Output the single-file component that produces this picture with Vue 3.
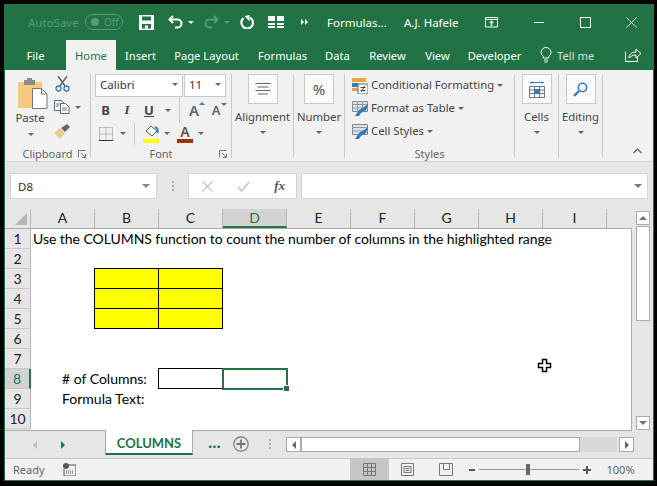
<script setup>
const tabs = [
  { label: 'File', w: 61 }, { label: 'Home', w: 50, active: true }, { label: 'Insert', w: 49 },
  { label: 'Page Layout', w: 83 }, { label: 'Formulas', w: 69 }, { label: 'Data', w: 41 },
  { label: 'Review', w: 59 }, { label: 'View', w: 41 }, { label: 'Developer', w: 73 }
]
const cols = ['A', 'B', 'C', 'D', 'E', 'F', 'G', 'H', 'I']
const rows = [1, 2, 3, 4, 5, 6, 7, 8, 9, 10]
const yellow = [
  { c: 2, r: 3 }, { c: 3, r: 3 }, { c: 2, r: 4 }, { c: 3, r: 4 }, { c: 2, r: 5 }, { c: 3, r: 5 }
]
</script>

<template>
  <div class="frame">
    <div class="win">
      <div class="title">
        <span class="autosave">AutoSave</span>
        <span class="toggle"><i></i><b>Off</b></span>
        <svg class="t-save" width="15" height="15" viewBox="0 0 15 15"><path d="M0 0h15v15H0z" fill="#fff"/><path d="M3 1.500h9v4H3z" fill="#217346"/><path d="M3 9h9v4.500H3z" fill="#217346"/><path d="M6 10.500h3v3H6z" fill="#fff"/></svg>
        <svg class="t-undo" width="15" height="14" viewBox="0 0 15 14"><path d="M5 1L1.500 4.500 5 8M2 4.500h7.500a4 4 0 0 1 0 8H7" fill="none" stroke="#fff" stroke-width="2"/></svg>
        <i class="caret white t-c1"></i>
        <svg class="t-redo" width="15" height="14" viewBox="0 0 15 14"><path d="M10 1l3.500 3.500L10 8M13 4.500H5.500a4 4 0 0 0 0 8H8" fill="none" stroke="#5d9a78" stroke-width="2"/></svg>
        <i class="caret dim t-c2"></i>
        <svg class="t-ref" width="14" height="14" viewBox="0 0 14 14"><path d="M3.500 3.200A5.800 5.800 0 1 0 10 2.600" fill="none" stroke="#fff" stroke-width="2.200"/><path d="M9.500 0v6.500L4.500 1z" fill="#fff"/></svg>
        <svg class="t-grid" width="16" height="14" viewBox="0 0 16 14"><path d="M0 1h7v5H0zM9 1h7v5H9zM0 8h7v2H0zM9 8h7v2H9zM0 11h7v2H0zM9 11h7v2H9z" fill="#fff"/></svg>
        <span class="t-more"><i></i><i></i></span>
        <span class="t-doc">Formulas...</span>
        <span class="t-user">A.J. Hafele</span>
        <svg class="t-disp" width="13" height="11" viewBox="0 0 13 11"><path d="M.5.500h12v9.500H.5zM.5 2.500h12" fill="none" stroke="#fff"/><path d="M6.500 3.500L4 6h1.800v3h1.400V6H9z" fill="#fff"/></svg>
        <i class="t-min"></i>
        <i class="t-max"></i>
        <svg class="t-close" width="11" height="11" viewBox="0 0 11 11"><path d="M.5.500l10 10M10.500.500l-10 10" stroke="#fff" fill="none"/></svg>
      </div>

      <div class="tabs">
        <span v-for="t in tabs" :key="t.label" class="tab" :class="{ active: t.active }" :style="{ width: t.w + 'px' }">{{ t.label }}</span>
        <svg class="bulb" width="12" height="16" viewBox="0 0 12 16"><path d="M3.500 11C3.500 8.500 1 8 1 5.500a5 5 0 0 1 10 0C11 8 8.500 8.500 8.500 11zM4 13h4M4.500 15h3" fill="none" stroke="#fff"/></svg>
        <span class="tell">Tell me</span>
        <svg class="share" width="17" height="14" viewBox="0 0 17 14"><path d="M.5 3.500v10h12v-4" fill="none" stroke="#fff"/><path d="M4 10c0-4 3-6 7-6V1l5 4.500L11 10V7C8 7 6 8 4 10z" fill="none" stroke="#fff"/></svg>
      </div>

      <div class="ribbon">
        <div class="group g-clip">
          <div class="gbody clip">
            <div class="paste">
              <svg width="30" height="31" viewBox="0 0 30 31"><path d="M0 4h24v26H0z" fill="#f4ca7f"/><path d="M6 2h3V0h5v2h3v5H6z" fill="#8c8c8c"/><path d="M14.500 10.500h9l5.500 5.500v14.500H14.500z" fill="#fff" stroke="#777"/><path d="M23.500 10.500v5.500H29" fill="none" stroke="#777"/></svg>
              <span class="rtext">Paste</span>
              <i class="caret paste-c"></i>
            </div>
            <div class="clip-tools">
              <svg class="scis" width="15" height="16" viewBox="0 0 15 16"><path d="M3 0l7 10M12 0L5 10" stroke="#666" stroke-width="1.500" fill="none"/><circle cx="3.500" cy="12.500" r="2.500" fill="none" stroke="#2e7dbd" stroke-width="1.300"/><circle cx="11.500" cy="12.500" r="2.500" fill="none" stroke="#2e7dbd" stroke-width="1.300"/></svg>
              <div class="copy-row">
                <svg width="16" height="14" viewBox="0 0 16 14"><path d="M.5.500h7l2 2v8h-9z" fill="#fff" stroke="#666"/><path d="M6.500 3.500h5l3.500 3.500v6.500H6.500z" fill="#fff" stroke="#666"/><path d="M2 4h4M2 6h3M8 8h5M8 10h5" stroke="#3d86c4"/></svg>
                <i class="caret copy-c"></i>
              </div>
              <svg class="brush" width="16" height="15" viewBox="0 0 16 15"><path d="M0 9l6-5 5 5-5 6z" fill="#e9c98d"/><path d="M7 4l4 4 5-5-3-3z" fill="#666"/></svg>
            </div>
          </div>
          <div class="glabel">Clipboard<svg class="launch" width="8" height="8" viewBox="0 0 8 8"><path d="M.5 7.500V.500h7M7.500 4v3.500H4M3 3l4 4" stroke="#777" fill="none"/></svg></div>
        </div>

        <div class="group g-font">
          <div class="gbody font">
            <div class="font-r1">
              <div class="combo c-name">Calibri<i class="caret"></i></div>
              <div class="combo c-size">11<i class="caret"></i></div>
            </div>
            <div class="font-r2">
              <span class="fb b">B</span><span class="fb it">I</span><span class="fb un">U</span>
              <i class="caret fc"></i><span class="vsep"></span>
              <span class="grow big">A<i class="up"></i></span>
              <span class="grow small">A<i class="down"></i></span>
            </div>
            <div class="font-r3">
              <svg class="bord" width="14" height="14" viewBox="0 0 14 14"><path d="M.5.500h13v13M.5.500v13M7 .500v13M.5 7h13" fill="none" stroke="#888" stroke-dasharray="1 1"/><path d="M0 13.500h14" stroke="#333"/></svg>
              <i class="caret r3c1"></i><span class="vsep s3"></span>
              <span class="colorbtn c-fill">
                <svg width="15" height="12" viewBox="0 0 15 12"><path d="M7 1l6 5-5 5-6-5z" fill="#fff" stroke="#555"/><path d="M11 2c3 1 3 4 2.500 6" stroke="#3d86c4" stroke-width="2" fill="none"/></svg>
                <i class="bar yl"></i>
              </span>
              <i class="caret r3c2"></i>
              <span class="colorbtn c-col"><span class="colA">A</span><i class="bar rd"></i></span>
              <i class="caret r3c3"></i>
            </div>
          </div>
          <div class="glabel">Font<svg class="launch l-font" width="8" height="8" viewBox="0 0 8 8"><path d="M.5 7.500V.500h7M7.500 4v3.500H4M3 3l4 4" stroke="#777" fill="none"/></svg></div>
        </div>

        <div class="group g-align">
          <div class="gbody bigcol">
            <div class="bigbtn"><svg width="16" height="12" viewBox="0 0 16 12"><path d="M.500 .5h15M2.500 4h11M.500 7.500h15M3 11h10" stroke="#666" fill="none"/></svg></div>
            <span class="rtext r-big">Alignment</span><i class="caret"></i>
          </div>
        </div>

        <div class="group g-num">
          <div class="gbody bigcol">
            <div class="bigbtn pct">%</div>
            <span class="rtext r-big">Number</span><i class="caret"></i>
          </div>
        </div>

        <div class="group g-styles">
          <div class="gbody styles">
            <div class="srow">
              <svg width="16" height="16" viewBox="0 0 16 16"><path d="M0 0h14v4H0z" fill="#e8a33d"/><path d="M0 5h6v4H0z" fill="#2e7dbd"/><path d="M0 10h6v3H0z" fill="#e8a33d"/><path d="M6 6h10v10H6z" fill="#fff" stroke="#666"/><path d="M8.500 9.500h5M8.500 12.500h5M12.500 8l-3 6" stroke="#444" fill="none"/></svg>
              <span class="rtext">Conditional Formatting</span><i class="caret"></i>
            </div>
            <div class="srow">
              <svg width="16" height="16" viewBox="0 0 16 16"><path d="M.500.500h15v10H.500z" fill="#d8e4ec" stroke="#888"/><path d="M0 3.500h16M0 7h16M5.500 0v11M10.500 0v11" stroke="#999"/><path d="M3 15l4-6 5-3 4-3-2 6-5 3-2 3z" fill="#2e7dbd"/></svg>
              <span class="rtext">Format as Table</span><i class="caret"></i>
            </div>
            <div class="srow">
              <svg width="16" height="16" viewBox="0 0 16 16"><path d="M.500.500h15v10H.500z" fill="#d8e4ec" stroke="#888"/><path d="M0 3.500h16M0 7h16" stroke="#999"/><path d="M3 15l4-6 5-3 4-3-2 6-5 3-2 3z" fill="#2e7dbd"/></svg>
              <span class="rtext">Cell Styles</span><i class="caret"></i>
            </div>
          </div>
          <div class="glabel">Styles</div>
        </div>

        <div class="group g-cells">
          <div class="gbody bigcol">
            <div class="bigbtn"><svg width="16" height="17" viewBox="0 0 16 17"><path d="M1 1.500h14M3 .500v2M13 .500v2" stroke="#2e7dbd" fill="none"/><path d="M.500 5.500h15v11H.500zM.500 9h15M.500 12.500h15M5.500 5v11M10.500 5v11" fill="none" stroke="#777"/><path d="M5 8h6v5H5z" fill="#2e7dbd"/></svg></div>
            <span class="rtext r-big">Cells</span><i class="caret"></i>
          </div>
        </div>

        <div class="group g-edit">
          <div class="gbody bigcol">
            <div class="bigbtn"><svg width="15" height="15" viewBox="0 0 15 15"><circle cx="9.500" cy="5.500" r="4.200" fill="none" stroke="#2e7dbd" stroke-width="1.600"/><path d="M1 14l5-5" stroke="#2e7dbd" stroke-width="2.400"/></svg></div>
            <span class="rtext r-big">Editing</span><i class="caret"></i>
          </div>
        </div>

        <div class="rib-end"><svg width="9" height="6" viewBox="0 0 9 6"><path d="M.500 5L4.500 1l4 4" stroke="#666" stroke-width="1.400" fill="none"/></svg></div>
      </div>

      <div class="fbar">
        <div class="namebox">D8<i class="caret"></i></div>
        <span class="vdots"><i></i><i></i><i></i></span>
        <div class="fxbox">
          <svg width="11" height="11" viewBox="0 0 11 11"><path d="M.5.500l10 10M10.500.500l-10 10" stroke="#c6c6c6" stroke-width="1.300" fill="none"/></svg>
          <svg width="13" height="11" viewBox="0 0 13 11"><path d="M1 6l3.500 4L12 1" stroke="#c6c6c6" stroke-width="1.600" fill="none"/></svg>
          <span class="fx">fx</span>
        </div>
        <div class="finput"><i class="caret"></i></div>
      </div>

      <div class="sheetwrap">
        <div class="sheet">
          <div class="colhead">
            <div class="corner"><i></i></div>
            <div v-for="c in cols" :key="c" class="ch" :class="{ sel: c === 'D' }">{{ c }}</div>
          </div>
          <div class="sbody">
            <div class="rowhead">
              <div v-for="r in rows" :key="r" class="rh" :class="{ sel: r === 8 }">{{ r }}</div>
            </div>
            <div class="cells">
              <div class="cell heading">Use the COLUMNS function to count the number of columns in the highlighted range</div>
              <div
                v-for="y in yellow"
                :key="y.c + '-' + y.r"
                class="yellow"
                :style="{ gridColumn: y.c, gridRow: y.r }"
              ></div>
              <div class="cell lbl l8"># of Columns:</div>
              <div class="boxed"></div>
              <div class="selected"><i></i></div>
              <div class="cell lbl l9">Formula Text:</div>
              <svg class="cursor" width="15" height="15" viewBox="0 0 15 15"><path d="M5.500 1.500h4v4h4v4h-4v4h-4v-4h-4v-4h4z" fill="#fff" stroke="#000" stroke-width="1.500"/></svg>
            </div>
          </div>
        </div>
        <div class="vscroll">
          <div class="sbtn"><i class="tri-up"></i></div>
          <div class="vthumb"></div>
          <div class="vtrack"></div>
          <div class="sbtn dn"><i class="caret"></i></div>
        </div>
      </div>

      <div class="sheettabs">
        <i class="arr-l"></i>
        <i class="arr-r"></i>
        <div class="stab">COLUMNS</div>
        <span class="dots">...</span>
        <span class="plus"><svg width="16" height="16" viewBox="0 0 16 16"><circle cx="8" cy="8" r="7.200" fill="none" stroke="#777" stroke-width="1.200"/><path d="M8 3.500v9M3.500 8h9" stroke="#777" stroke-width="1.800"/></svg></span>
        <span class="vdots v2"><i></i><i></i><i></i></span>
        <div class="hscroll">
          <div class="hbtn"><i class="tl"></i></div>
          <div class="hthumb"></div>
          <div class="htrack"></div>
          <div class="hbtn last"><i class="tr"></i></div>
        </div>
      </div>

      <div class="status">
        <span class="ready">Ready</span>
        <svg class="macro" width="13" height="13" viewBox="0 0 13 13"><circle cx="3" cy="3" r="3" fill="#555"/><path d="M5 2h8v11H1V6" fill="none" stroke="#555"/><path d="M3 8h8M3 10h8" stroke="#555" stroke-dasharray="1 1"/></svg>
        <div class="views">
          <span class="vw on"><svg width="13" height="13" viewBox="0 0 13 13"><path d="M.5.500h12v12H.5zM4.500 0v13M8.500 0v13M0 4.500h13M0 8.500h13" fill="none" stroke="#777"/></svg></span>
          <span class="vw"><svg width="13" height="13" viewBox="0 0 13 13"><path d="M.5.500h12v12H.5z" fill="none" stroke="#777"/><path d="M3 3.500h7v6H3zM4.500 5.500h4M4.500 7.500h4" fill="none" stroke="#777"/></svg></span>
          <span class="vw"><svg width="14" height="13" viewBox="0 0 14 13"><path d="M.5.500h13v12H.5zM4.500.500v6h6v-6" fill="none" stroke="#777"/></svg></span>
        </div>
        <i class="zminus"></i>
        <div class="slider"><i></i></div>
        <i class="zplus"></i>
        <span class="zoompc">100%</span>
      </div>
    </div>
  </div>
</template>

<style>
html, body { margin: 0; background: #000; }
</style>

<style scoped>
.frame { width: 657px; height: 486px; box-sizing: border-box; padding: 4px 3px 5px 4px; background: #000; overflow: hidden; font-family: "Noto Sans", sans-serif; font-size: 11.300px; color: #444; }
.win { width: 650px; height: 477px; box-sizing: border-box; border: 1px solid #217346; border-width: 0 1px 1px 1px; background: #e6e6e6; display: flex; flex-direction: column; }
i { display: block; font-style: normal; }
.caret { width: 0; height: 0; border-left: 3px solid transparent; border-right: 3px solid transparent; border-top: 3px solid #666; flex: none; }
.caret.white { border-top-color: #fff; }
.caret.dim { border-top-color: #5d9a78; }

.title { height: 36px; flex: none; background: #217346; display: flex; align-items: center; color: #fff; padding-left: 23px; }
.autosave { width: 57px; color: #5d9a78; font-size: 11.500px; }
.toggle { width: 38px; height: 16px; box-sizing: border-box; border: 1px solid #5d9a78; border-radius: 8px; display: flex; align-items: center; color: #5d9a78; font-size: 10px; padding-left: 5px; font-style: normal; }
.toggle i { width: 8px; height: 8px; border-radius: 50%; background: #5d9a78; margin-right: 5px; }
.toggle b { font-weight: normal; }
.t-save { margin-left: 16px; }
.t-undo { margin-left: 14px; }
.t-c1 { margin-left: 5px; }
.t-redo { margin-left: 10px; }
.t-c2 { margin-left: 5px; }
.t-ref { margin-left: 10px; }
.t-grid { margin-left: 14px; }
.t-more { margin-left: 17px; display: flex; gap: 1px; }
.t-more i { width: 0; height: 0; border-left: 3px solid #fff; border-top: 3px solid transparent; border-bottom: 3px solid transparent; }
.t-doc { margin-left: 19px; width: 77px; font-size: 11.500px; }
.t-user { width: 81px; font-size: 11.500px; }
.t-min { width: 10px; height: 1px; background: #fff; margin-left: 36px; }
.t-max { width: 9px; height: 9px; border: 1px solid #fff; margin-left: 36px; }
.t-close { margin-left: 35px; }

.tabs { height: 30px; flex: none; background: #217346; display: flex; align-items: stretch; color: #fff; }
.tab { display: flex; align-items: center; justify-content: center; flex: none; font-size: 11.200px; }
.tab.active { background: #f1f1f1; color: #217346; }
.bulb { align-self: center; margin-left: 9px; }
.tell { align-self: center; margin-left: 5px; color: #d3e3da; width: 68px; font-size: 11.200px; }
.share { align-self: center; }

.ribbon { height: 92px; flex: none; box-sizing: border-box; background: #f1f1f1; border-bottom: 1px solid #d2d2d2; padding-top: 4px; display: flex; }
.group { height: 84px; box-sizing: border-box; border-right: 1px solid #c8c8c8; flex: none; display: flex; flex-direction: column; }
.gbody { height: 73px; flex: none; }
.glabel { height: 14px; line-height: 14px; text-align: center; color: #666; font-size: 11px; position: relative; }
.launch { position: absolute; right: 4px; top: 3px; }
.g-clip { width: 86px; }
.g-font { width: 141px; }
.g-align { width: 62px; }
.g-num { width: 51px; }
.g-styles { width: 170px; }
.g-cells, .g-edit { width: 44px; }

.clip { display: flex; }
.paste { width: 49px; padding-top: 4px; display: flex; flex-direction: column; align-items: center; padding-left: 7px; box-sizing: border-box; }
.rtext { color: #444; white-space: nowrap; }
.paste .rtext { line-height: 18px; margin-left: -6px; }
.paste-c { margin-top: 6px; margin-left: -4px; }
.clip-tools { display: flex; flex-direction: column; }
.scis { margin-top: 2px; margin-left: 1px; }
.copy-row { display: flex; align-items: center; margin-top: 8px; }
.copy-c { margin-left: 5px; }
.brush { margin-top: 10px; }

.font { box-sizing: border-box; padding-left: 4px; }
.font-r1 { display: flex; gap: 1px; height: 22px; }
.combo { box-sizing: border-box; height: 23px; background: #fff; border: 1px solid #c8c8c8; display: flex; align-items: center; justify-content: space-between; padding: 0 4px 2px; color: #333; font-size: 11.500px; }
.c-name { width: 88px; }
.c-size { width: 42px; }
.font-r2 { display: flex; align-items: center; height: 26px; margin-top: 1px; }
.fb { width: 22px; text-align: center; color: #444; font-size: 13px; flex: none; }
.fb.b { font-weight: bold; width: 21px; }
.fb.it { font-style: italic; font-family: "Liberation Serif", serif; font-weight: bold; }
.fb.un { text-decoration: underline; font-weight: bold; }
.fc { margin-left: 5px; }
.vsep { width: 1px; height: 26px; background: #c8c8c8; margin-left: 8px; }
.grow { position: relative; width: 14px; text-align: center; color: #666; font-weight: 600; flex: none; }
.grow.big { font-size: 15px; margin-left: 7px; }
.grow.small { font-size: 13px; margin-left: 8px; }
.up, .down { position: absolute; right: -4px; top: 2px; width: 0; height: 0; border-left: 3px solid transparent; border-right: 3px solid transparent; }
.up { border-bottom: 3px solid #2e7dbd; }
.down { border-top: 3px solid #2e7dbd; }
.font-r3 { display: flex; align-items: center; height: 21px; }
.bord { margin-left: 4px; }
.r3c1 { margin-left: 7px; }
.s3 { height: 22px; margin-left: 8px; }
.colorbtn { width: 16px; display: flex; flex-direction: column; align-items: center; flex: none; }
.c-fill { margin-left: 8px; }
.r3c2 { margin-left: 5px; }
.c-col { margin-left: 7px; }
.r3c3 { margin-left: 5px; }
.bar { width: 16px; height: 4px; }
.bar.yl { background: #ffff00; margin-top: 2px; }
.bar.rd { background: #a33100; }
.colA { font-size: 14px; line-height: 14px; font-weight: 600; color: #555; }

.bigcol { display: flex; flex-direction: column; align-items: center; }
.bigbtn { width: 30px; height: 30px; box-sizing: border-box; border: 1px solid #c8c8c8; background: #fafafa; display: flex; align-items: center; justify-content: center; flex: none; }
.pct { font-size: 15px; color: #555; }
.r-big { line-height: 18px; margin-top: 4px; }
.bigcol .caret { margin-top: 5px; }

.styles { box-sizing: border-box; padding-left: 7px; }
.srow { height: 23px; display: flex; align-items: center; }
.srow .rtext { margin: 0 0 2px 3px; }
.srow .caret { margin-left: 3px; }

.rib-end { flex: 1; display: flex; justify-content: flex-end; align-items: flex-end; padding: 0 11px 4px 0; height: 84px; box-sizing: border-box; }

.fbar { height: 47px; flex: none; box-sizing: border-box; padding: 11px 5px 0 5px; display: flex; background: #e6e6e6; }
.namebox, .fxbox, .finput { height: 26px; box-sizing: border-box; background: #fff; border: 1px solid #d4d4d4; }
.namebox { width: 147px; display: flex; align-items: center; justify-content: space-between; padding: 0 6px 0 7px; color: #333; font-size: 11.500px; }
.namebox .caret { border-left-width: 4px; border-right-width: 4px; border-top-width: 4px; border-top-color: #888; }
.vdots { width: 31px; height: 26px; display: flex; flex-direction: column; align-items: center; justify-content: center; gap: 2px; flex: none; }
.vdots i { width: 2px; height: 2px; background: #aaa; }
.fxbox { width: 109px; display: flex; align-items: center; justify-content: space-between; padding: 0 11px 0 13px; }
.fx { font-family: "Liberation Serif", serif; font-style: italic; font-weight: bold; font-size: 13px; color: #555; }
.finput { margin-left: 4px; width: 347px; display: flex; align-items: center; justify-content: flex-end; padding-right: 5px; }
.finput .caret { border-left-width: 4px; border-right-width: 4px; border-top-width: 4px; border-top-color: #777; }

.sheetwrap { height: 222px; flex: none; display: flex; font-family: "Lato", sans-serif; }
.sheet { width: 627px; flex: none; display: flex; flex-direction: column; }
.colhead { height: 19px; flex: none; display: flex; background: #e6e6e6; border-bottom: 1px solid #ababab; overflow: hidden; }
.corner { width: 26px; height: 19px; flex: none; position: relative; box-sizing: border-box; border-right: 1px solid #b5b5b5; }
.corner i { position: absolute; right: 3px; bottom: 3px; width: 0; height: 0; border-left: 12px solid transparent; border-bottom: 12px solid #b5b5b5; }
.ch { width: 64px; height: 19px; box-sizing: border-box; border-right: 1px solid #b5b5b5; flex: none; text-align: center; line-height: 18px; color: #222; font-size: 14px; }
.ch.sel { background: #d2d2d2; color: #217346; border-bottom: 2px solid #217346; }
.sbody { flex: 1; display: flex; min-height: 0; border-right: 1px solid #ababab; border-bottom: 1px solid #ababab; overflow: hidden; }
.rowhead { width: 26px; flex: none; }
.rh { height: 20px; box-sizing: border-box; border-right: 1px solid #b5b5b5; border-bottom: 1px solid #c8c8c8; background: #e6e6e6; text-align: center; line-height: 20px; color: #222; font-size: 14px; }
.rh.sel { background: #d2d2d2; color: #217346; border-right: 2px solid #217346; }
.cells { flex: 1; background: #fff; position: relative; display: grid; grid-template-columns: repeat(9, 64px); grid-template-rows: repeat(10, 20px); color: #000; font-size: 14px; overflow: hidden; }
.cell { line-height: 20px; white-space: nowrap; }
.heading { grid-column: 1; grid-row: 1; padding-left: 2px; letter-spacing: -0.05px; }
.yellow { background: #ffff00; border-right: 1px solid #000; border-bottom: 1px solid #000; }
.yellow:nth-child(2), .yellow:nth-child(3) { border-top: 1px solid #000; margin-top: -1px; }
.yellow:nth-child(2), .yellow:nth-child(4), .yellow:nth-child(6) { border-left: 1px solid #000; margin-left: -1px; }
.lbl { padding-left: 31px; }
.l8 { grid-column: 1 / span 2; grid-row: 8; }
.l9 { grid-column: 1 / span 2; grid-row: 9; }
.boxed { grid-column: 3; grid-row: 8; border: 1px solid #000; margin: -1px 0 0 -1px; }
.selected { grid-column: 4; grid-row: 8; border: 2px solid #217346; margin: -1px -1px -1px -1px; position: relative; z-index: 1; }
.selected i { position: absolute; right: -4px; bottom: -4px; width: 5px; height: 5px; background: #217346; border: 1px solid #fff; }
.cursor { position: absolute; left: 506px; top: 129px; }

.vscroll { flex: 1; display: flex; flex-direction: column; align-items: flex-start; padding: 2px 0 1px 4px; box-sizing: border-box; }
.sbtn { width: 14px; height: 14px; box-sizing: border-box; border: 1px solid #ababab; background: #fff; display: flex; align-items: center; justify-content: center; flex: none; }
.tri-up { width: 0; height: 0; border-left: 4px solid transparent; border-right: 4px solid transparent; border-bottom: 4px solid #777; }
.sbtn .caret { border-left-width: 4px; border-right-width: 4px; border-top-width: 4px; border-top-color: #777; }
.vthumb { width: 14px; height: 95px; margin-top: 1px; box-sizing: border-box; border: 1px solid #ababab; background: #fff; flex: none; }
.vtrack { flex: 1; }

.sheettabs { height: 27px; flex: none; display: flex; align-items: flex-start; background: #e6e6e6; border-bottom: 1px solid #c6c6c6; box-sizing: content-box; }
.arr-l { margin: 10px 0 0 28px; width: 0; height: 0; border-right: 4px solid #bbb; border-top: 4px solid transparent; border-bottom: 4px solid transparent; }
.arr-r { margin: 10px 0 0 24px; width: 0; height: 0; border-left: 4px solid #217346; border-top: 4px solid transparent; border-bottom: 4px solid transparent; }
.stab { margin-left: 40px; width: 88px; height: 25px; box-sizing: border-box; background: #fff; border-left: 1px solid #ababab; border-right: 1px solid #ababab; border-bottom: 2px solid #217346; margin-top: -1px; color: #217346; font-family: "Lato", sans-serif; font-weight: bold; font-size: 13px; text-align: center; line-height: 26px; flex: none; }
.dots { margin-left: 15px; color: #217346; font-weight: bold; font-size: 15px; line-height: 22px; width: 13px; flex: none; }
.plus { margin: 5px 0 0 12px; display: flex; flex: none; }
.v2 { width: 32px; padding-left: 5px; height: 16px; margin-top: 5px; }
.hscroll { display: flex; margin-top: 6px; flex: none; }
.hbtn { width: 15px; height: 15px; box-sizing: border-box; border: 1px solid #ababab; background: #fff; display: flex; align-items: center; justify-content: center; flex: none; }
.tl { width: 0; height: 0; border-right: 4px solid #666; border-top: 4px solid transparent; border-bottom: 4px solid transparent; }
.tr { width: 0; height: 0; border-left: 4px solid #666; border-top: 4px solid transparent; border-bottom: 4px solid transparent; }
.hthumb { width: 279px; height: 15px; box-sizing: border-box; border: 1px solid #ababab; background: #fff; }
.htrack { width: 37px; height: 15px; background: #d8d8d8; }
.hbtn.last { margin-left: 2px; }

.status { flex: 1; display: flex; align-items: center; background: #f1f1f1; color: #666; padding-left: 8px; min-height: 0; }
.ready { width: 50px; font-size: 11px; }
.macro { flex: none; }
.views { display: flex; margin-left: 274px; height: 100%; }
.vw { width: 38.500px; display: flex; align-items: center; justify-content: center; }
.vw.on { background: #c6c6c6; }
.zminus { width: 6px; height: 2px; background: #555; margin-left: 3px; }
.slider { width: 100px; height: 1px; background: #999; margin-left: 4px; position: relative; }
.slider i { position: absolute; left: 47px; top: -5px; width: 4px; height: 11px; background: #666; }
.zplus { width: 8px; height: 8px; margin-left: 4px; background: linear-gradient(#555, #555) center / 8px 2px no-repeat, linear-gradient(#555, #555) center / 2px 8px no-repeat; }
.zoompc { margin-left: 16px; font-size: 11px; }
</style>
